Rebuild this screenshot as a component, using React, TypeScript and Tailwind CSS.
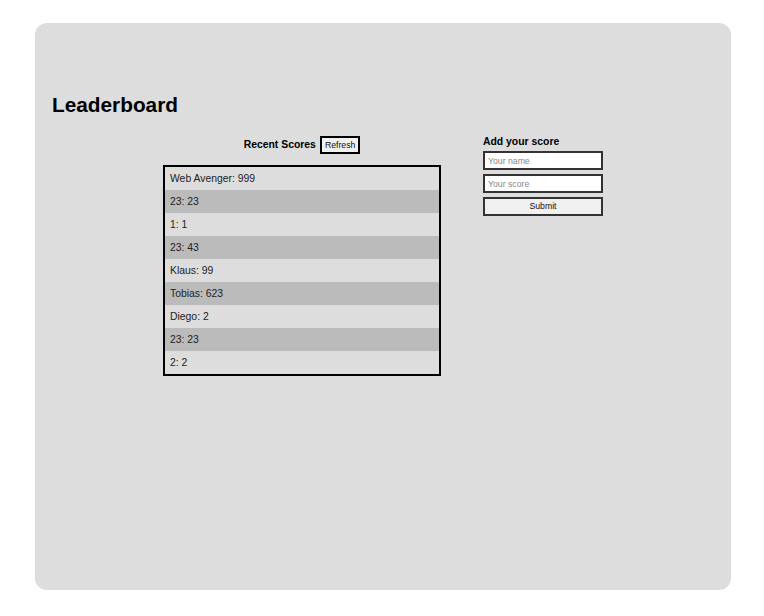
export default function App() {
  const scores = [
    "Web Avenger: 999",
    "23: 23",
    "1: 1",
    "23: 43",
    "Klaus: 99",
    "Tobias: 623",
    "Diego: 2",
    "23: 23",
    "2: 2",
  ];
  return (
    <div className="min-h-[616px] w-[764px] bg-white pt-[23px] pl-[35px]" style={{ fontFamily: '"Liberation Sans", Arial, sans-serif' }}>
      <div className="w-[696px] h-[567px] rounded-[12px] bg-[#dddddd] pt-[70px] px-[17px]">
        <h1 className="text-[20.8px] leading-[24px] font-bold text-black m-0">Leaderboard</h1>
        <div className="flex justify-center gap-[42px] mt-[18px] -ml-[17px] -mr-[17px]">
          <div className="w-[278px] flex flex-col">
            <div className="flex items-center justify-center h-[18px] gap-[4px] mt-[1px]">
              <span className="text-[10.4px] font-bold text-black">Recent Scores</span>
              <button className="h-[18px] px-[3px] border-2 border-black bg-[#f0f0f0] text-[8.7px] text-[#111] leading-none">Refresh</button>
            </div>
            <div className="mt-[11px] border-2 border-black">
              {scores.map((s, i) => (
                <div
                  key={i}
                  className={`h-[23px] flex items-center pl-[5px] text-[10.4px] text-[#222] ${i % 2 === 1 ? "bg-[#bbbbbb]" : "bg-[#dddddd]"}`}
                >
                  {s}
                </div>
              ))}
            </div>
          </div>
          <div className="w-[120px] flex flex-col">
            <div className="text-[10.4px] font-bold text-black leading-[12px] h-[12px] mt-[1px]">Add your score</div>
            <input
              className="mt-[3px] h-[19px] w-[120px] border-2 border-[#333] bg-white px-[3px] text-[8.7px] placeholder:text-[#888] outline-none"
              placeholder="Your name"
            />
            <input
              className="mt-[4px] h-[19px] w-[120px] border-2 border-[#333] bg-white px-[3px] text-[8.7px] placeholder:text-[#888] outline-none"
              placeholder="Your score"
            />
            <button className="mt-[4px] h-[19px] w-[120px] border-2 border-[#333] bg-[#f0f0f0] text-[8.7px] text-[#111] leading-none">
              Submit
            </button>
          </div>
        </div>
      </div>
    </div>
  );
}
